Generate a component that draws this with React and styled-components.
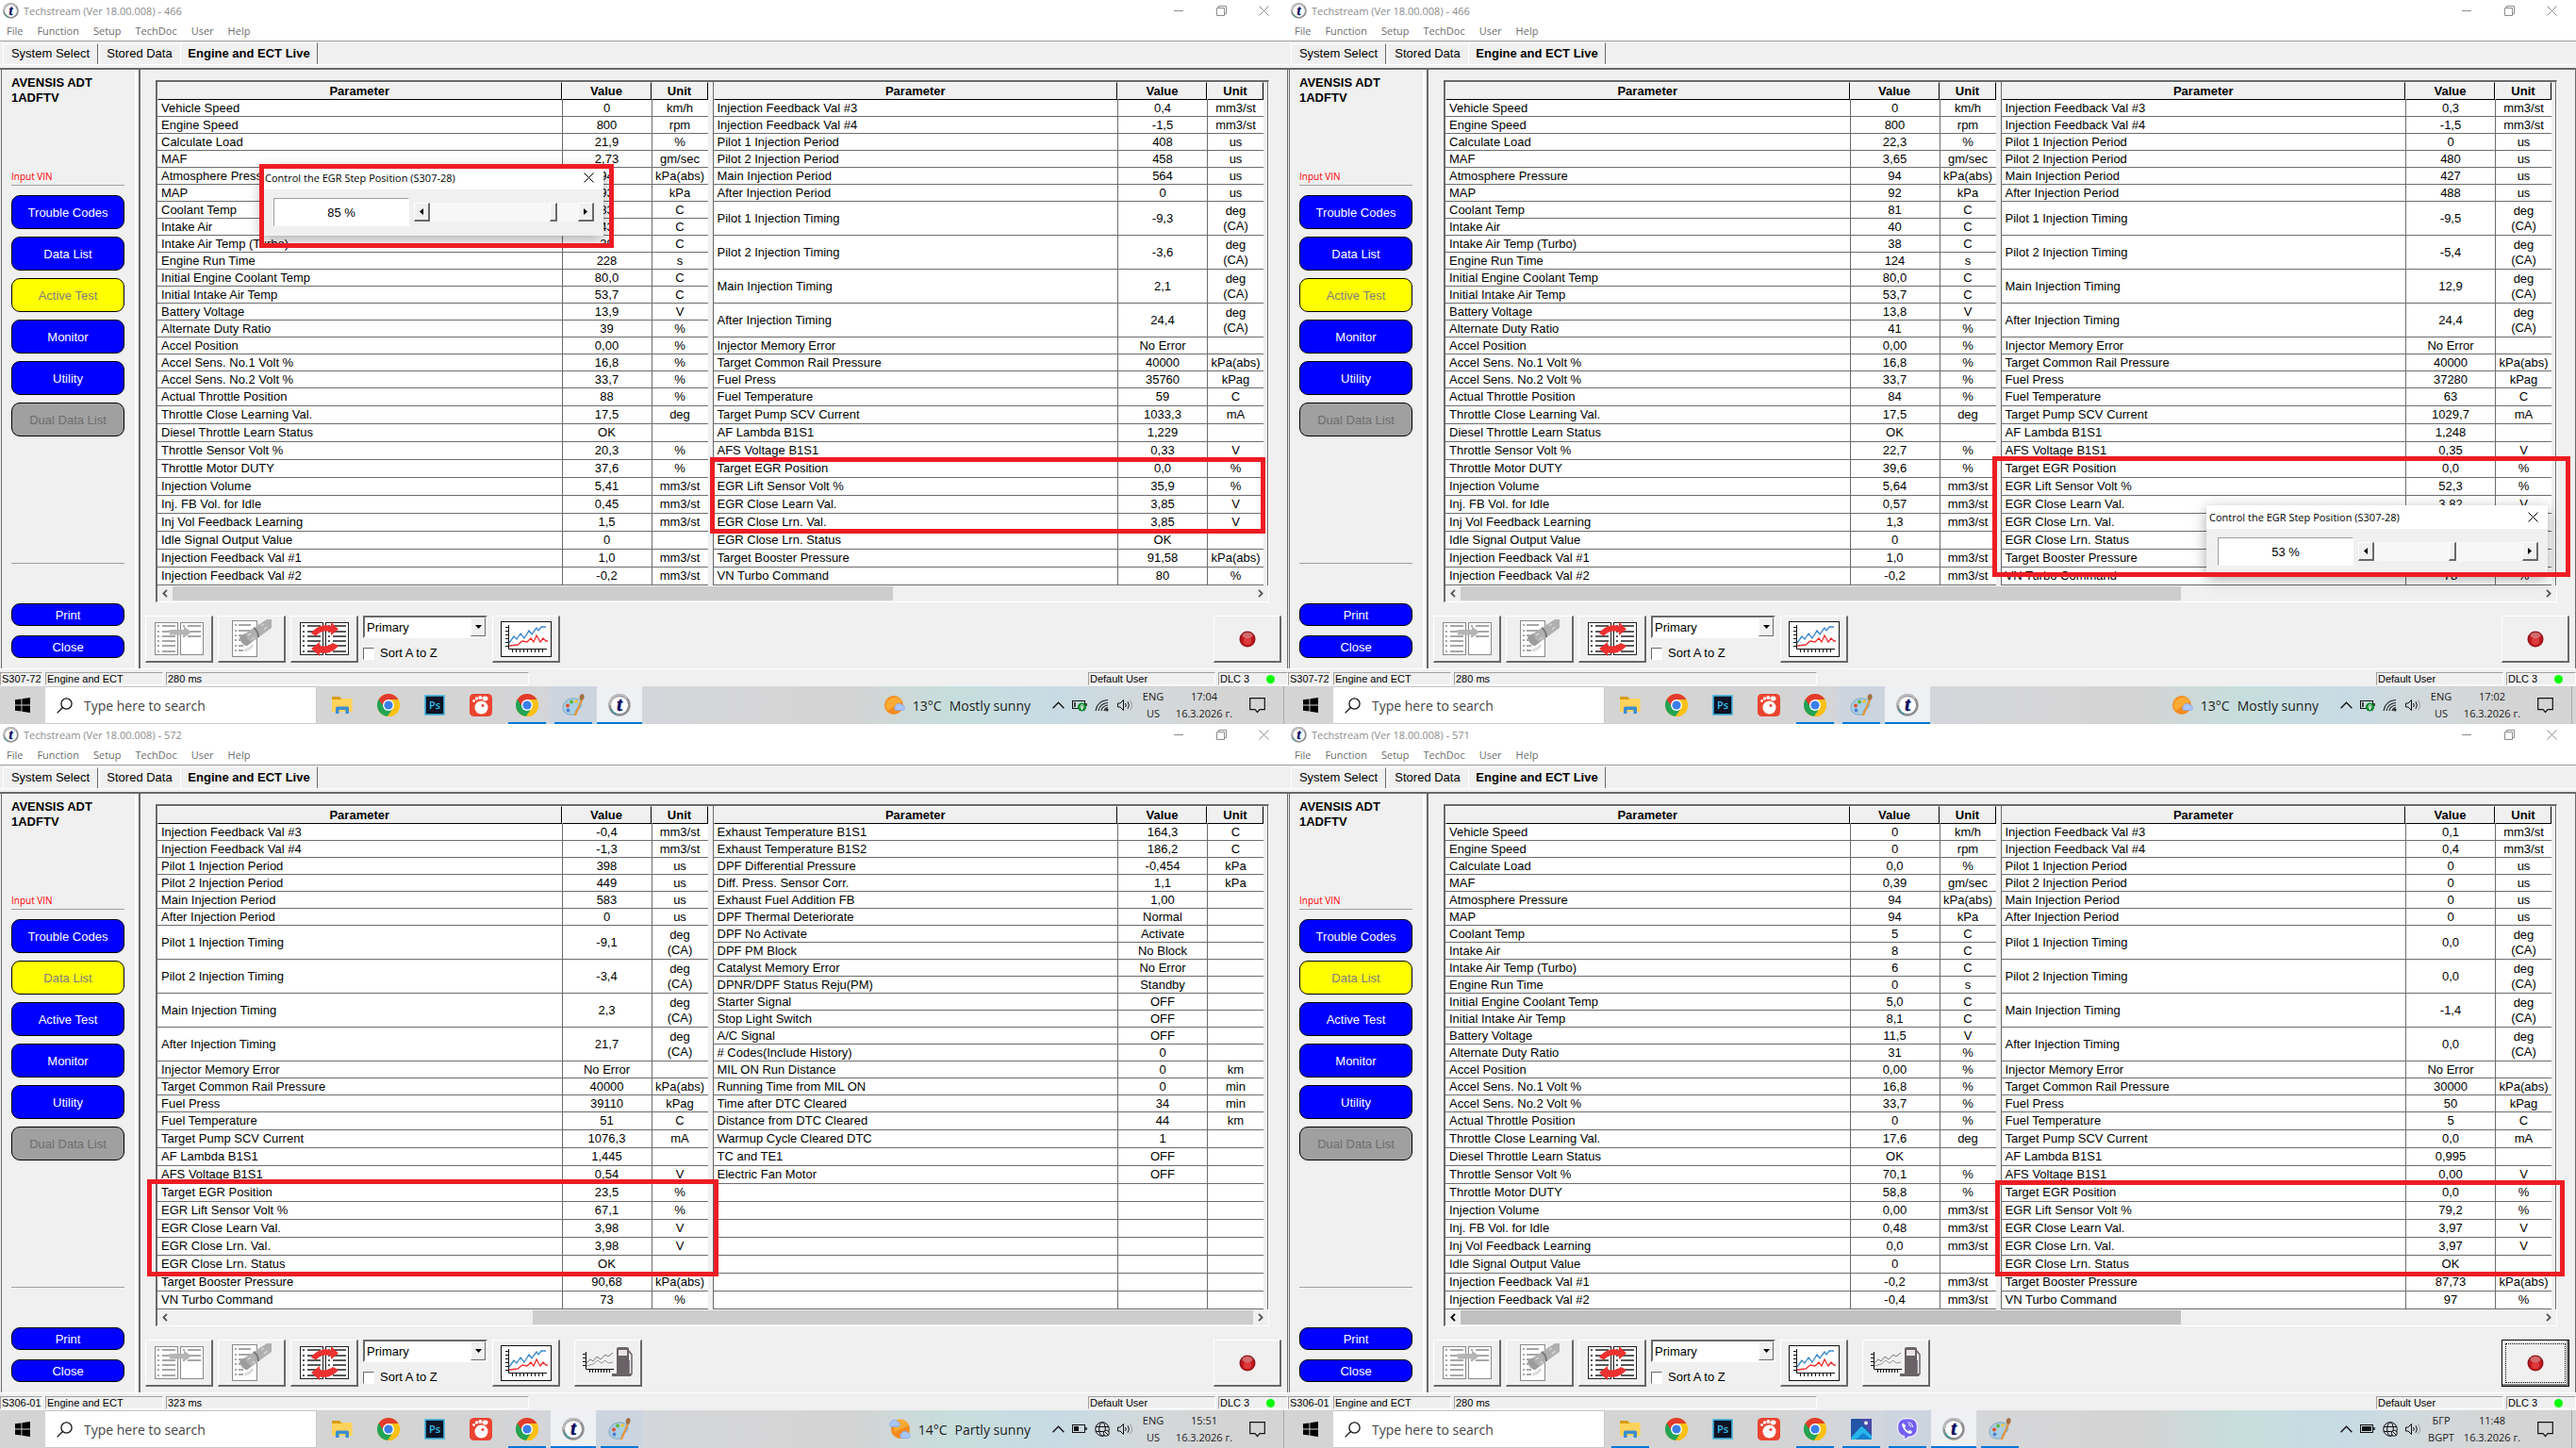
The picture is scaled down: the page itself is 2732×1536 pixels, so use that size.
import { useId, useState } from "react";
import styled, { createGlobalStyle, css } from "styled-components";

const GlobalStyle = createGlobalStyle`
  *, *::before, *::after { box-sizing: border-box; }
  body {
    margin: 0;
    background: #f0f0f0;
    font-family: "Liberation Sans", Arial, sans-serif;
    font-size: 13px;
    color: #000;
  }
  button, input, select { font: inherit; color: inherit; margin: 0; }
`;

const segoe = css`font-family: "Open Sans", "Segoe UI", sans-serif;`;

const raised = css`
  border: 2px solid;
  border-color: #fff #696969 #696969 #fff;
`;

const sunken = css`
  border: 1px solid;
  border-color: #a0a0a0 #fff #fff #a0a0a0;
`;

const Wall = styled.main`
  display: grid;
  grid-template-columns: 1fr 1fr;
  grid-auto-rows: minmax(50vh, auto);
`;

const Screen = styled.section`
  position: relative;
  display: flex;
  flex-direction: column;
  min-width: 0;
  overflow: hidden;
  background: #f0f0f0;
`;

const TitleBar = styled.header`
  ${segoe}
  display: flex;
  align-items: center;
  height: 23px;
  padding: 0 20px 0 3px;
  gap: 5px;
  background: #fff;
  color: #8c8c8c;
  font-size: 11px;
`;

const Title = styled.h1`
  margin: 0;
  flex: 1;
  font-size: 11px;
  font-weight: 400;
`;

const WindowButtons = styled.div`
  display: flex;
  gap: 34px;
  height: 20px;
`;

const GlyphButton = styled.button`
  display: flex;
  align-items: center;
  justify-content: center;
  padding: 0;
  border: 0;
  background: none;
`;

const MenuBar = styled.nav`
  ${segoe}
  display: flex;
  align-items: center;
  height: 21px;
  padding: 0 0 2px 7px;
  gap: 15px;
  background: #fff;
  border-bottom: 1px solid #a0a0a0;
  font-size: 11px;

  a {
    color: #6d6d6d;
    text-decoration: none;
  }
`;

const Tabs = styled.div`
  display: flex;
  align-items: flex-end;
  height: 25px;
  padding-left: 3px;
  border-bottom: 1px solid #fff;
`;

const Tab = styled.button`
  width: ${({ $width }) => $width}px;
  height: ${({ $active }) => ($active ? 23 : 22)}px;
  padding: 0 0 2px;
  border: 0;
  border-left: 1px solid #fff;
  border-top: 1px solid #fff;
  border-right: ${({ $edge }) => ($edge ? "1px solid #696969" : "0")};
  background: #f0f0f0;
  font-weight: ${({ $active }) => ($active ? 700 : 400)};
  white-space: nowrap;
  margin-right: 1px;
`;

const Workspace = styled.div`
  flex: 1;
  display: flex;
  gap: 2px;
  border-top: 2px solid #696969;
  margin-top: 3px;
  padding-left: 1px;
`;

const Sidebar = styled.aside`
  display: flex;
  flex-direction: column;
  flex: none;
  width: 144px;
  padding: 6px 11px 11px 10px;
  border-left: 1px solid #696969;
  border-right: 2px solid #fff;
`;

const Vehicle = styled.div`
  height: 98px;
  font-weight: 700;
  line-height: 16px;
`;

const Vin = styled.a`
  ${segoe}
  color: #f00;
  font-size: 10px;
  line-height: 18px;
  text-decoration: none;
`;

const Rule = styled.hr`
  width: 100%;
  margin: 0;
  border: 0;
  border-top: 1px solid #a0a0a0;
`;

const SideStack = styled.div`
  display: flex;
  flex-direction: column;
  gap: ${({ $gap }) => $gap}px;
  padding: ${({ $top }) => $top}px 0 0;
`;

const Spacer = styled.div`
  flex: 1;
`;

const sideColors = {
  blue: ["#0000ff", "#fff"],
  yellow: ["#ffff00", "#808080"],
  gray: ["#a0a0a0", "#6d6d6d"],
};

const SideButton = styled.button`
  height: ${({ $small }) => ($small ? 24 : 36)}px;
  padding: 0;
  border: 1px solid #000;
  border-radius: 9px;
  background: ${({ $tone }) => sideColors[$tone][0]};
  color: ${({ $tone }) => sideColors[$tone][1]};
`;

const Panel = styled.div`
  flex: 1;
  min-width: 0;
  display: flex;
  flex-direction: column;
  padding: 11px 6px 0 5px;
  border-left: 2px solid #696969;
  border-right: 1px solid #696969;
`;

const GridBox = styled.div`
  margin: 0 13px 0 11px;
  border: 1px solid;
  border-width: 2px 1px 1px 2px;
  border-color: #696969 #fff #fff #696969;
`;

const GridColumns = styled.div`
  display: flex;
  gap: 5px;
  padding-right: 4px;
  border-right: 1px solid #696969;
`;

const DataTable = styled.table`
  flex: 1;
  width: 0;
  table-layout: fixed;
  border-collapse: separate;
  border-spacing: 0;
  background: #fff;
  line-height: 16px;

  & + & {
    border-left: 1px solid #696969;
  }
`;

const HeadCell = styled.th`
  width: ${({ $width }) => $width || "auto"};
  height: 19px;
  padding: 0;
  background: #f0f0f0;
  border: 1px solid;
  border-color: #fff #000 #000 #fff;
`;

const Cell = styled.td`
  height: ${({ $height }) => $height}px;
  padding: 0 0 0 ${({ $name }) => ($name ? 4 : 0)}px;
  border-bottom: 1px solid #6d6d6d;
  border-left: ${({ $name }) => ($name ? "0" : "1px solid #6d6d6d")};
  text-align: ${({ $name }) => ($name ? "left" : "center")};
  white-space: nowrap;
`;

const ScrollBar = styled.div`
  display: flex;
  height: 17px;
  padding: 1px 0;
`;

const ScrollTrack = styled.div`
  flex: 1;
  display: flex;
  justify-content: ${({ $end }) => ($end ? "flex-end" : "flex-start")};
`;

const ScrollThumb = styled.div`
  width: 66.66%;
  background: ${({ $dark }) => ($dark ? "#c0c0c0" : "#cdcdcd")};
`;

const ScrollArrow = styled(GlyphButton)`
  width: 16px;
`;

const ToolRow = styled.div`
  display: flex;
  align-items: flex-start;
  padding-top: 14px;
  gap: 5px;
`;

const ToolButton = styled.button`
  display: flex;
  align-items: center;
  justify-content: center;
  width: 72px;
  height: 50px;
  padding: 0;
  background: #f0f0f0;
  ${raised}
  border-width: 1px 2px 2px 1px;
`;

const FuelButton = styled(ToolButton)`
  margin-left: 10px;
`;

const RecordButton = styled(ToolButton)`
  margin-left: auto;
  ${({ $focused }) =>
    $focused &&
    css`
      border: 1px solid #000;
      box-shadow: inset -2px -2px 0 #808080, inset 1px 1px 0 #fff;
      outline: 1px dotted #000;
      outline-offset: -5px;
    `}
`;

const SortBox = styled.div`
  display: flex;
  flex-direction: column;
  width: 132px;
  gap: 8px;
`;

const SelectWrap = styled.div`
  position: relative;
  height: 24px;

  select {
    appearance: none;
    width: 100%;
    height: 24px;
    padding: 1px 20px 0 2px;
    background: #fff;
    border: 2px solid;
    border-color: #696969 #fff #fff #696969;
    border-radius: 0;
  }
`;

const SelectArrow = styled.span`
  position: absolute;
  top: 2px;
  right: 2px;
  bottom: 2px;
  display: flex;
  align-items: center;
  justify-content: center;
  width: 16px;
  background: #f0f0f0;
  ${raised}
  border-width: 1px;
  pointer-events: none;
`;

const CheckLabel = styled.label`
  display: flex;
  align-items: center;
  gap: 6px;
  line-height: 16px;

  input {
    appearance: none;
    width: 12px;
    height: 13px;
    background: #fff;
    border: 1px solid;
    border-color: #696969 #fff #fff #696969;
  }
`;

const StatusBar = styled.footer`
  display: flex;
  gap: 3px;
  height: 19px;
  padding: 3px 0 1px;
  border-top: 1px solid #fff;
  font-size: 11px;
`;

const StatusCell = styled.div`
  display: flex;
  align-items: center;
  width: ${({ $width }) => $width}px;
  margin-left: ${({ $push }) => ($push ? "auto" : "0")};
  padding-left: 1px;
  gap: 18px;
  ${sunken}
  white-space: nowrap;
`;

const Led = styled.span`
  width: 9px;
  height: 9px;
  border-radius: 50%;
  background: #0f0;
`;

const TaskBar = styled.div`
  ${segoe}
  display: flex;
  height: 40px;
  background: linear-gradient(90deg, #d4d4d4 0 38%, #d2d6de 46%, #d5d6d8 55%, #d4d4d4 66%, #c6dedd 74%, #c8dbe4 82%, #d4d8da 90%, #d4d4d4 95%);
`;

const StartButton = styled(GlyphButton)`
  width: 48px;
`;

const Search = styled.label`
  display: flex;
  align-items: center;
  width: 288px;
  padding-left: 12px;
  gap: 12px;
  background: #fff;
  border: 1px solid #c8c8c8;
  border-left: 0;

  input {
    flex: 1;
    min-width: 0;
    padding: 0;
    border: 0;
    outline: 0;
    background: none;
    font-size: 14px;
  }
  input::placeholder {
    color: #444;
    opacity: 1;
  }
`;

const Pinned = styled.div`
  display: flex;
  gap: 1px;
  padding-left: 3px;
`;

const taskBack = { active: "#eef0f4", open: "#ccd4df" };

const TaskButton = styled(GlyphButton)`
  width: 48px;
  height: 40px;
  background: ${({ $state }) => taskBack[$state] || "none"};
  position: relative;

  &::after {
    content: "";
    position: absolute;
    bottom: 0;
    left: ${({ $state }) => ($state === "active" ? 0 : 4)}px;
    right: ${({ $state }) => ($state === "active" ? 0 : 4)}px;
    height: 2px;
    background: ${({ $state }) => ($state ? "#0078d7" : "none")};
  }
`;

const Tray = styled.div`
  display: flex;
  align-items: center;
  margin-left: auto;
  font-size: 14px;
  color: #1c1c1c;
`;

const Weather = styled.div`
  display: flex;
  align-items: center;
  gap: 8px;
  margin-right: 23px;
  white-space: nowrap;
`;

const TrayIcons = styled.div`
  display: flex;
  align-items: center;
  gap: 8px;
`;

const TrayText = styled.div`
  width: ${({ $width }) => $width}px;
  font-size: 11px;
  line-height: 18px;
  text-align: center;
  white-space: nowrap;
`;

const Notice = styled(GlyphButton)`
  width: 36px;
  margin-left: 5px;
  margin-right: 10px;
`;

const ShowDesktop = styled.div`
  width: 5px;
  height: 40px;
  border-left: 1px solid #a8a8a8;
`;

/* Red frames and the test dialog float over the data grid */
const Mark = styled.div`
  position: absolute;
  left: ${({ $x }) => $x}px;
  top: ${({ $y }) => $y}px;
  width: ${({ $w }) => $w}px;
  height: ${({ $h }) => $h}px;
  border: 5px solid #ed1c24;
  pointer-events: none;
`;

const Dialog = styled.div`
  position: absolute;
  left: ${({ $x }) => $x}px;
  top: ${({ $y }) => $y}px;
  width: 362px;
  background: #f0f0f0;
  box-shadow: 0 4px 14px rgba(0, 0, 0, 0.35);
`;

const DialogTitle = styled.div`
  ${segoe}
  display: flex;
  align-items: center;
  justify-content: space-between;
  height: 25px;
  padding: 0 10px 0 3px;
  background: #fff;
  font-size: 11px;
`;

const DialogBody = styled.div`
  display: flex;
  align-items: center;
  padding: 9px 10px 10px 12px;
`;

const StepValue = styled.input`
  width: 144px;
  height: 30px;
  margin-right: 5px;
  padding: 0;
  text-align: center;
  background: #fff;
  border: 1px solid;
  border-color: #a0a0a0 #fff #fff #a0a0a0;
`;

const StepButton = styled(GlyphButton)`
  width: 17px;
  height: 20px;
  background: #f0f0f0;
  ${raised}
  border-width: 1px 2px 2px 1px;
`;

const StepSlider = styled.input`
  appearance: none;
  flex: 1;
  min-width: 0;
  height: 20px;
  background: #f7f7f7;

  &::-webkit-slider-thumb {
    appearance: none;
    width: 8px;
    height: 20px;
    background: #f0f0f0;
    border: 1px solid;
    border-width: 1px 2px 2px 1px;
    border-color: #fff #696969 #696969 #fff;
  }
`;

const TechLogo = ({ size }) => (
  <svg width={size} height={size} viewBox="0 0 24 24">
    <circle cx="12" cy="12" r="10.4" fill="#fff" stroke="#8f8f8f" strokeWidth="2.6" />
    <path d="M2 12A10 10 0 0 1 20 5" fill="none" stroke="#bdbdbd" strokeWidth="2.6" />
    <path d="M3 16A10 10 0 0 0 9 21.6" fill="none" stroke="#3f9a9a" strokeWidth="1.4" />
    <text x="12" y="18" textAnchor="middle" fontFamily="Liberation Serif, serif" fontStyle="italic" fontWeight="700" fontSize="20" fill="#0a0a60" stroke="#0a0a60" strokeWidth=".6">t</text>
  </svg>
);

const CloseGlyph = () => (
  <svg width="11" height="11" viewBox="0 0 11 11" stroke="currentColor" fill="none">
    <path d="M.5.5l10 10M10.5.5l-10 10" />
  </svg>
);

const Chevron = ({ flip, color = "#555" }) => (
  <svg width="6" height="9" viewBox="0 0 6 9" fill="none" stroke={color} strokeWidth="1.8">
    <path d={flip ? "M1 .8l3.6 3.7L1 8.2" : "M5 .8L1.4 4.5 5 8.2"} />
  </svg>
);

const Triangle = ({ flip }) => (
  <svg width="4" height="7" viewBox="0 0 4 7">
    <path d={flip ? "M0 0l4 3.5L0 7z" : "M4 0L0 3.5 4 7z"} />
  </svg>
);

const rowsAll = [4, 10, 15, 20, 25, 31];

const Page = ({ x, color, lines = rowsAll }) => (
  <g>
    <rect x={x + 0.5} y="0.5" width="24" height="34" fill="#fff" stroke={color} />
    {lines.map((y) => (
      <path key={y} d={`M${x + 3} ${y}h2M${x + 8} ${y}h14`} stroke={color} strokeWidth="1.5" />
    ))}
  </g>
);

const MoveIcon = () => (
  <svg width="52" height="35" viewBox="0 0 52 35">
    <Page x={0} color="#8a8a8a" />
    <Page x={27} color="#8a8a8a" lines={[4, 10, 15]} />
    <path d="M16 8h15V4.5l8 6-8 6V13.5H16z" fill="#b4b4b4" />
  </svg>
);

const EraseIcon = () => (
  <svg width="42" height="41" viewBox="0 0 42 41">
    <rect x=".5" y="1.5" width="26" height="38" fill="#fff" stroke="#8a8a8a" />
    {[6, 12, 17, 22, 28, 33].map((y) => (
      <path key={y} d={`M3 ${y}h2M7 ${y}h${y > 15 ? 5 : 13}`} stroke="#8a8a8a" strokeWidth="1.5" />
    ))}
    <path d="M13 33c6-1 8-4 9-6" stroke="#dcdcdc" strokeWidth="3" fill="none" />
    <path d="M8 19L37 0h5v9L16 28c-4 0-8-5-8-9z" fill="#b0b0b0" />
    <path d="M8 19c2 4 4 8 8 9l5-4c-4-1-6-5-7-9z" fill="#9c9c9c" />
    <path d="M23 9c3 2 5 5 5 10" fill="none" stroke="#777" strokeWidth="2" />
    <path d="M17 17l3-2M21 21l3-2M31 7l3-2M34 11l3-3" stroke="#d8d8d8" strokeWidth="1.5" />
  </svg>
);

const SwapIcon = () => (
  <svg width="52" height="36" viewBox="0 0 52 36">
    <Page x={0} color="#222" />
    <Page x={27} color="#222" />
    <path d="M12 12C17 4 27 2 33 4V0l8 7.5L33 14v-3.500c-6-2-11-1-16 4z" fill="#ed3030" />
    <path d="M41 25c-5 7-14 9-20 7.500V36l-9-8 9-7v4c6 1 10 0 14-3z" fill="#ed3030" />
  </svg>
);

const ChartIcon = () => (
  <svg width="54" height="38" viewBox="0 0 54 38" fill="none">
    <rect x=".5" y=".5" width="53" height="37" fill="#fff" stroke="#111" />
    <path d="M8.500 4v25.500H49M5 6.500h4M5 10.500h4M5 14.500h4M5 18.500h4M5 22.500h4M5 26.500h4" stroke="#111" />
    <path d="M12.500 30v3M16.500 30v3M20.500 30v3M24.500 30v3M28.500 30v3M32.500 30v3M36.500 30v3M40.500 30v3M44.500 30v3" stroke="#111" />
    <path d="M9 23l5-7 3 3 4-6 4 5 5-8 3 4 5-7 2 3 3-4h5" stroke="#3b86cc" strokeWidth="1.3" />
    <path d="M9 26l9-1 5-4 5 1 4-4 3 4 3-7 4 7 3-4 3 3h2" stroke="#ed3030" strokeWidth="1.3" />
  </svg>
);

const FuelIcon = () => (
  <svg width="54" height="34" viewBox="0 0 54 34" fill="none">
    <path d="M3.500 5v18.500H33M0 7.500h4M0 11.500h4M0 15.500h4M0 19.500h4" stroke="#111" />
    <path d="M7.500 24v3M10.500 24v3M13.500 24v3M16.500 24v3M19.500 24v3M22.500 24v3M25.500 24v3M28.500 24v3" stroke="#111" />
    <path d="M4 17l4-4 3 2 4-5 4 3 5-5 3 2 5-4" stroke="#777" />
    <path d="M4 20l7-2 5-4 4 3 4-3 3 3 5-1" stroke="#999" />
    <path d="M36 2q0-2 2-2h9q2 0 2 2v26h2v3H31v-3h5z" fill="#6a6266" />
    <rect x="38" y="3" width="9" height="6" fill="#e8e4e4" />
    <path d="M49 4l3 4v20q-1 3-3 1V14" stroke="#6a6266" strokeWidth="1.5" />
  </svg>
);

const RecordIcon = () => (
  <svg width="18" height="18" viewBox="0 0 18 18">
    <circle cx="9" cy="9" r="8.5" fill="#8e1116" />
    <circle cx="9" cy="9.5" r="7" fill="#c01a20" />
    <circle cx="9" cy="11" r="4" fill="#dc3b3b" />
    <ellipse cx="9" cy="5" rx="5.5" ry="3.2" fill="#d98585" opacity=".75" />
  </svg>
);

const WindowsIcon = () => (
  <svg width="16" height="16" viewBox="0 0 16 16">
    <path d="M0 2.300L6.500 1.400V7.600H0zM7.400 1.300L16 0v7.600H7.400zM0 8.400h6.500v6.200L0 13.700zM7.400 8.400H16V16l-8.600-1.200z" />
  </svg>
);

const SearchIcon = () => (
  <svg width="17" height="17" viewBox="0 0 17 17" fill="none" stroke="#111" strokeWidth="1.3">
    <circle cx="10.5" cy="6.5" r="5.6" />
    <path d="M6.500 10.500L.6 16.400" />
  </svg>
);

const FolderIcon = () => (
  <svg width="22" height="20" viewBox="0 0 22 20">
    <path d="M0 1h8l2 2h11v4H0z" fill="#d99b0f" />
    <path d="M0 4h9l2-1h10.500v14H0z" fill="#ffd35c" />
    <path d="M4 19v-6q0-1.500 1.500-1.500h11q1.500 0 1.500 1.500v6h-3.500v-4h-7v4z" fill="#3b8ed0" />
  </svg>
);

const ChromeIcon = () => (
  <svg width="24" height="24" viewBox="0 0 24 24">
    <circle cx="12" cy="12" r="12" fill="#fbc116" />
    <path d="M1.600 6A12 12 0 0 0 11 24l6.500-9z" fill="#23a455" />
    <path d="M12 6h10.400A12 12 0 0 1 11 24l6-9z" fill="#fbc116" />
    <path d="M1.600 6A12 12 0 0 1 22.400 6H12z" fill="#e33b2e" />
    <path d="M1.600 6L7 15l5-9z" fill="#23a455" />
    <path d="M1.600 6L6.500 13 12 6z" fill="#e33b2e" />
    <path d="M1.600 6l5.200 9L5 17 .8 8z" fill="#23a455" />
    <circle cx="12" cy="12" r="6" fill="#fff" />
    <circle cx="12" cy="12" r="4.6" fill="#3c7eea" />
  </svg>
);

const PhotoshopIcon = () => (
  <svg width="22" height="22" viewBox="0 0 22 22">
    <rect x="1" y="1" width="20" height="20" fill="#0c1226" stroke="#3fb4dc" strokeWidth="1.6" />
    <text x="11" y="15" textAnchor="middle" fontFamily="Open Sans, sans-serif" fontWeight="600" fontSize="11" fill="#35c0ea">Ps</text>
  </svg>
);

const GomIcon = () => (
  <svg width="24" height="24" viewBox="0 0 24 24">
    <rect width="24" height="24" rx="4.5" fill="#ea4430" />
    <circle cx="12.5" cy="14.5" r="7" fill="#fff" />
    <circle cx="4.6" cy="7.5" r="1.4" fill="#fff" />
    <circle cx="7.5" cy="5" r="1.7" fill="#fff" />
    <circle cx="11.3" cy="3.9" r="2" fill="#fff" />
    <ellipse cx="16.5" cy="5" rx="3" ry="2.4" fill="#fff" />
    <circle cx="14" cy="12.5" r="1.5" fill="#ea4430" />
  </svg>
);

const PaintIcon = () => (
  <svg width="24" height="24" viewBox="0 0 24 24">
    <path d="M1 15C1 8 8 4 14 5c6 1 8 5 6 9-1 2-4 1-5 3s1 4-3 5C6 23 1 20 1 15z" fill="#a9cfe4" stroke="#6b9dba" strokeWidth=".8" />
    <circle cx="6" cy="12.5" r="2" fill="#e2502e" />
    <circle cx="10" cy="8.5" r="1.9" fill="#5db53c" />
    <circle cx="15" cy="8" r="1.8" fill="#f4c431" />
    <circle cx="6.5" cy="17.5" r="1.9" fill="#4d7fd0" />
    <path d="M12.500 23L20 6l2 1-7 16z" fill="#e2953d" />
    <path d="M19 6c-1-3 0-5 2-6 2 0 3 2 2.500 4L22 7z" fill="#a3703d" />
  </svg>
);

const PhotosIcon = () => (
  <svg width="22" height="22" viewBox="0 0 22 22">
    <rect width="22" height="22" rx="1" fill="#2455a8" />
    <path d="M9 0h13v16z" fill="#4a4aa8" />
    <path d="M0 20L10 9q1.500-1.500 3 0l9 9v4H1z" fill="#27b5ea" />
    <path d="M5 22l8-7 9 7z" fill="#1283cf" />
    <circle cx="16" cy="4.5" r="1.9" fill="#e6effb" />
  </svg>
);

const ViberIcon = () => (
  <svg width="24" height="24" viewBox="0 0 24 24">
    <path d="M12 .6c8 0 10.500 3 10.500 10S19 20.500 13 20.500L8.500 24v-4.200C3.500 18.500 1.500 16 1.500 10.500 1.500 3.500 4 .6 12 .6z" fill="#7360f2" stroke="#efeafd" strokeWidth="1.4" />
    <path d="M7.500 5.500c-2 1-1.500 3 0 5.500 2 3.500 5 6 7.500 6 1.500-.5 2.500-1.800 1.500-2.700l-2-1.300c-1 0-1 1.200-2 1-1.800-.8-3-2.300-3.400-4 .2-.8 1.200-.8 1-1.800z" fill="#fff" />
    <path d="M12.500 5c3 0 5 2 5 5M13 7.200c1.500.2 2.400 1 2.500 2.500" stroke="#fff" fill="none" />
  </svg>
);

const taskIcons = {
  Explorer: <FolderIcon />,
  Chrome: <ChromeIcon />,
  Photoshop: <PhotoshopIcon />,
  Player: <GomIcon />,
  Browser: <ChromeIcon />,
  Paint: <PaintIcon />,
  Techstream: <TechLogo size={24} />,
  Photos: <PhotosIcon />,
  Viber: <ViberIcon />,
};

const Cloud = ({ x, y }) => (
  <path transform={`translate(${x} ${y})`} d="M3 8.500a3 3 0 0 1 0-5A4 4 0 0 1 10 3a3 3 0 0 1 1 5.500z" fill="#a9c6fb" stroke="#7ea4ee" strokeWidth=".7" />
);

const WeatherIcon = ({ partly }) => (
  <svg width={partly ? 24 : 22} height="22" viewBox={partly ? "0 0 24 22" : "0 0 22 22"}>
    <circle cx={partly ? 13 : 10} cy="11" r="10" fill="#f68a1e" />
    <path d={partly ? "M6 3a10 10 0 0 1 16 4L6 14z" : "M1 11A10 10 0 0 1 19 7L3 17z"} fill="#f9ab33" />
    {partly && <Cloud x={0} y={0} />}
    <Cloud x={partly ? 11 : 9} y={partly ? 12 : 8} />
  </svg>
);

const UpIcon = () => (
  <svg width="13" height="8" viewBox="0 0 13 8" fill="none" stroke="#111" strokeWidth="1.3">
    <path d="M.6 7.200l5.900-6 5.900 6" />
  </svg>
);

const BatteryIcon = ({ kind }) => (
  <svg width="16" height="14" viewBox="0 0 16 14" fill="none" stroke="#111">
    <rect x=".5" y="2.5" width="13" height="8" />
    <path d="M15 5v3" strokeWidth="1.5" />
    {kind === "full" && <rect x="2.5" y="4.5" width="9" height="4" fill="#111" />}
    {kind === "half" && <rect x="2.5" y="4.5" width="4" height="4" fill="#111" />}
    {kind === "eco" && (
      <g>
        <path d="M3 4v5" strokeWidth="1.5" />
        <circle cx="10.5" cy="9" r="4.6" fill="#108a2c" stroke="none" />
        <path d="M10.500 6c2 2 2 4 0 5-2-1-2-3 0-5zM10.500 8v4" stroke="#fff" />
      </g>
    )}
  </svg>
);

const WifiIcon = () => (
  <svg width="16" height="14" viewBox="0 0 16 14" fill="none" stroke="#222" strokeWidth="1.2">
    <path d="M1 13C2 6 7 2 14 1.500M4 13c1-5 4-8 10-8.500M7 13c.5-3 3-5.500 7-6M10 13c.5-2 1.500-3 4-3.500" />
    <circle cx="13" cy="12" r="1" fill="#222" />
  </svg>
);

const GlobeIcon = () => (
  <svg width="16" height="16" viewBox="0 0 16 16" fill="none" stroke="#111">
    <circle cx="8" cy="8" r="7.3" />
    <ellipse cx="8" cy="8" rx="3.3" ry="7.3" />
    <path d="M1 5.500h14M1 10.500h14" />
    <circle cx="12.3" cy="12.3" r="3" fill="#d4dde0" />
    <path d="M10.300 10.300l4 4" />
  </svg>
);

const SoundIcon = () => (
  <svg width="17" height="14" viewBox="0 0 17 14" fill="none" stroke="#111">
    <path d="M.5 5v4h2.500l3.500 3.500v-11L3 5z" />
    <path d="M8.500 5q1.500 2 0 4M11 3.200q2.800 3.800 0 7.600" />
    <path d="M13.500 1.500q4 5.500 0 11" stroke="#999" />
  </svg>
);

const NoticeIcon = () => (
  <svg width="17" height="17" viewBox="0 0 17 17" fill="none" stroke="#111" strokeWidth="1.2">
    <path d="M.7.700h15.600v12H11L8.500 15.500 6 12.700H.7z" />
  </svg>
);

const leftNames = [
  ["Vehicle Speed", "km/h"],
  ["Engine Speed", "rpm"],
  ["Calculate Load", "%"],
  ["MAF", "gm/sec"],
  ["Atmosphere Pressure", "kPa(abs)"],
  ["MAP", "kPa"],
  ["Coolant Temp", "C"],
  ["Intake Air", "C"],
  ["Intake Air Temp (Turbo)", "C"],
  ["Engine Run Time", "s"],
  ["Initial Engine Coolant Temp", "C"],
  ["Initial Intake Air Temp", "C"],
  ["Battery Voltage", "V"],
  ["Alternate Duty Ratio", "%"],
  ["Accel Position", "%"],
  ["Accel Sens. No.1 Volt %", "%"],
  ["Accel Sens. No.2 Volt %", "%"],
  ["Actual Throttle Position", "%"],
  ["Throttle Close Learning Val.", "deg"],
  ["Diesel Throttle Learn Status", ""],
  ["Throttle Sensor Volt %", "%"],
  ["Throttle Motor DUTY", "%"],
  ["Injection Volume", "mm3/st"],
  ["Inj. FB Vol. for Idle", "mm3/st"],
  ["Inj Vol Feedback Learning", "mm3/st"],
  ["Idle Signal Output Value", ""],
  ["Injection Feedback Val #1", "mm3/st"],
  ["Injection Feedback Val #2", "mm3/st"],
];

const injectionNames = [
  ["Injection Feedback Val #3", "mm3/st"],
  ["Injection Feedback Val #4", "mm3/st"],
  ["Pilot 1 Injection Period", "us"],
  ["Pilot 2 Injection Period", "us"],
  ["Main Injection Period", "us"],
  ["After Injection Period", "us"],
  ["Pilot 1 Injection Timing", "deg (CA)"],
  ["Pilot 2 Injection Timing", "deg (CA)"],
  ["Main Injection Timing", "deg (CA)"],
  ["After Injection Timing", "deg (CA)"],
  ["Injector Memory Error", ""],
  ["Target Common Rail Pressure", "kPa(abs)"],
  ["Fuel Press", "kPag"],
  ["Fuel Temperature", "C"],
  ["Target Pump SCV Current", "mA"],
  ["AF Lambda B1S1", ""],
  ["AFS Voltage B1S1", "V"],
  ["Target EGR Position", "%"],
  ["EGR Lift Sensor Volt %", "%"],
  ["EGR Close Learn Val.", "V"],
  ["EGR Close Lrn. Val.", "V"],
  ["EGR Close Lrn. Status", ""],
  ["Target Booster Pressure", "kPa(abs)"],
  ["VN Turbo Command", "%"],
];

const exhaustNames = [
  ["Exhaust Temperature B1S1", "C"],
  ["Exhaust Temperature B1S2", "C"],
  ["DPF Differential Pressure", "kPa"],
  ["Diff. Press. Sensor Corr.", "kPa"],
  ["Exhaust Fuel Addition FB", ""],
  ["DPF Thermal Deteriorate", ""],
  ["DPF No Activate", ""],
  ["DPF PM Block", ""],
  ["Catalyst Memory Error", ""],
  ["DPNR/DPF Status Reju(PM)", ""],
  ["Starter Signal", ""],
  ["Stop Light Switch", ""],
  ["A/C Signal", ""],
  ["# Codes(Include History)", ""],
  ["MIL ON Run Distance", "km"],
  ["Running Time from MIL ON", "min"],
  ["Time after DTC Cleared", "min"],
  ["Distance from DTC Cleared", "km"],
  ["Warmup Cycle Cleared DTC", ""],
  ["TC and TE1", ""],
  ["Electric Fan Motor", ""],
  ["", ""], ["", ""], ["", ""], ["", ""], ["", ""], ["", ""], ["", ""],
];

const fill = (names, values) => {
  const list = values.split(" ");
  return names.map(([name, unit], i) => ({ name, unit, value: (list[i] || "").replace("_", " ") }));
};

const pinned = [["Explorer"], ["Chrome"], ["Photoshop"], ["Player"], ["Browser", "run"]];

const screens = [
  {
    title: "466",
    active: "Active Test",
    status: ["S307-72", "280 ms"],
    left: fill(leftNames, "0 800 21,9 2,73 94 93 83 43 39 228 80,0 53,7 13,9 39 0,00 16,8 33,7 88 17,5 OK 20,3 37,6 5,41 0,45 1,5 0 1,0 -0,2"),
    right: fill(injectionNames, "0,4 -1,5 408 458 564 0 -9,3 -3,6 2,1 24,4 No_Error 40000 35760 59 1033,3 1,229 0,33 0,0 35,9 3,85 3,85 OK 91,58 80"),
    dialog: { x: 278, y: 176, value: 85 },
    marks: [[275, 174, 376, 89], [753, 485, 589, 81]],
    tasks: [...pinned, ["Paint", "open"], ["Techstream", "active"]],
    weather: ["13°C", "Mostly sunny"],
    battery: "eco",
    lang: ["ENG", "US"],
    time: "17:04",
  },
  {
    title: "466",
    active: "Active Test",
    status: ["S307-72", "280 ms"],
    left: fill(leftNames, "0 800 22,3 3,65 94 92 81 40 38 124 80,0 53,7 13,8 41 0,00 16,8 33,7 84 17,5 OK 22,7 39,6 5,64 0,57 1,3 0 1,0 -0,2"),
    right: fill(injectionNames, "0,3 -1,5 0 480 427 488 -9,5 -5,4 12,9 24,4 No_Error 40000 37280 63 1029,7 1,248 0,35 0,0 52,3 3,82 3,82 OK 91,58 78"),
    dialog: { x: 974, y: 536, value: 53 },
    marks: [[747, 484, 613, 128]],
    tasks: [...pinned, ["Paint", "open"], ["Techstream", "active"]],
    weather: ["13°C", "Mostly sunny"],
    battery: "eco",
    lang: ["ENG", "US"],
    time: "17:02",
  },
  {
    title: "572",
    active: "Data List",
    status: ["S306-01", "323 ms"],
    left: fill(injectionNames, "-0,4 -1,3 398 449 583 0 -9,1 -3,4 2,3 21,7 No_Error 40000 39110 51 1076,3 1,445 0,54 23,5 67,1 3,98 3,98 OK 90,68 73"),
    right: fill(exhaustNames, "164,3 186,2 -0,454 1,1 1,00 Normal Activate No_Block No_Error Standby OFF OFF OFF 0 0 0 34 44 1 OFF OFF"),
    marks: [[156, 483, 606, 103]],
    tasks: [...pinned, ["Techstream", "active"], ["Paint", "open"]],
    weather: ["14°C", "Partly sunny"],
    battery: "half",
    lang: ["ENG", "US"],
    time: "15:51",
    fuel: true,
    scrolled: true,
  },
  {
    title: "571",
    active: "Data List",
    status: ["S306-01", "280 ms"],
    left: fill(leftNames, "0 0 0,0 0,39 94 94 5 8 6 0 5,0 8,1 11,5 31 0,00 16,8 33,7 0 17,6 OK 70,1 58,8 0,00 0,48 0,0 0 -0,2 -0,4"),
    right: fill(injectionNames, "0,1 0,4 0 0 0 0 0,0 0,0 -1,4 0,0 No_Error 30000 50 5 0,0 0,995 0,00 0,0 79,2 3,97 3,97 OK 87,73 97"),
    marks: [[750, 484, 604, 102]],
    tasks: [["Explorer", "run"], ["Chrome"], ["Photoshop"], ["Player"], ["Browser", "run"], ["Photos", "run"], ["Viber", "open"], ["Techstream", "active"], ["Paint", "run"]],
    battery: "full",
    lang: ["БГР", "BGPT"],
    time: "11:48",
    fuel: true,
    focused: true,
  },
];

function ParameterTable({ rows }) {
  let used = 0;
  return (
    <DataTable>
      <thead>
        <tr>
          <HeadCell>Parameter</HeadCell>
          <HeadCell $width="95px">Value</HeadCell>
          <HeadCell $width="60px">Unit</HeadCell>
        </tr>
      </thead>
      <tbody>
        {rows.map((row, i) => {
          const double = row.unit === "deg (CA)";
          const height = double ? 36 : used < 17 ? 18 : 19;
          used += double ? 2 : 1;
          return (
            <tr key={i}>
              <Cell $name $height={height}>{row.name}</Cell>
              <Cell $height={height}>{row.value}</Cell>
              <Cell $height={height}>{double ? <>deg<br />(CA)</> : row.unit}</Cell>
            </tr>
          );
        })}
      </tbody>
    </DataTable>
  );
}

function StepDialog({ x, y, value }) {
  const [step, setStep] = useState(value);
  return (
    <Dialog $x={x} $y={y} role="dialog" aria-label="Control the EGR Step Position">
      <DialogTitle>
        <span>Control the EGR Step Position (S307-28)</span>
        <GlyphButton aria-label="Close dialog"><CloseGlyph /></GlyphButton>
      </DialogTitle>
      <DialogBody>
        <StepValue aria-label="Step value" readOnly value={`${step} %`} />
        <StepButton aria-label="Decrease" onClick={() => setStep(Math.max(0, step - 1))}><Triangle /></StepButton>
        <StepSlider type="range" aria-label="EGR step" value={step} onChange={(e) => setStep(Number(e.target.value))} />
        <StepButton aria-label="Increase" onClick={() => setStep(Math.min(100, step + 1))}><Triangle flip /></StepButton>
      </DialogBody>
    </Dialog>
  );
}

function SideMenu({ active }) {
  const items = ["Trouble Codes", "Data List", "Active Test", "Monitor", "Utility", "Dual Data List"];
  const tone = (item) => (item === active ? "yellow" : item === "Dual Data List" ? "gray" : "blue");
  return (
    <Sidebar>
      <Vehicle>AVENSIS ADT<br />1ADFTV</Vehicle>
      <Vin href="#vin">Input VIN</Vin>
      <Rule />
      <SideStack $gap={8} $top={10}>
        {items.map((item) => (
          <SideButton key={item} $tone={tone(item)}>{item}</SideButton>
        ))}
      </SideStack>
      <Spacer />
      <Rule />
      <SideStack $gap={10} $top={42}>
        <SideButton $tone="blue" $small>Print</SideButton>
        <SideButton $tone="blue" $small>Close</SideButton>
      </SideStack>
    </Sidebar>
  );
}

function Toolbar({ fuel, focused }) {
  const id = useId();
  return (
    <ToolRow>
      <ToolButton aria-label="Move items"><MoveIcon /></ToolButton>
      <ToolButton aria-label="Clear list"><EraseIcon /></ToolButton>
      <ToolButton aria-label="Swap lists"><SwapIcon /></ToolButton>
      <SortBox>
        <SelectWrap>
          <select id={id} aria-label="Data group" defaultValue="Primary">
            <option>Primary</option>
          </select>
          <SelectArrow>
            <svg width="7" height="4" viewBox="0 0 7 4"><path d="M0 0h7L3.500 4z" /></svg>
          </SelectArrow>
        </SelectWrap>
        <CheckLabel><input type="checkbox" />Sort A to Z</CheckLabel>
      </SortBox>
      <ToolButton aria-label="Graph"><ChartIcon /></ToolButton>
      {fuel && <FuelButton aria-label="Fuel graph"><FuelIcon /></FuelButton>}
      <RecordButton aria-label="Record" $focused={focused}><RecordIcon /></RecordButton>
    </ToolRow>
  );
}

function Techstream({ data }) {
  const arrow = data.focused ? "#000" : "#555";
  return (
    <Screen>
      <TitleBar>
        <TechLogo size={17} />
        <Title>Techstream (Ver 18.00.008) - {data.title}</Title>
        <WindowButtons>
          <GlyphButton aria-label="Minimize">
            <svg width="11" height="11" viewBox="0 0 11 11" stroke="currentColor"><path d="M0 5.500h10" /></svg>
          </GlyphButton>
          <GlyphButton aria-label="Restore">
            <svg width="11" height="11" viewBox="0 0 11 11" stroke="currentColor" fill="none"><path d="M.5 2.500h8v8h-8zM2.500 2.500v-2h8v8h-2" /></svg>
          </GlyphButton>
          <GlyphButton aria-label="Close"><CloseGlyph /></GlyphButton>
        </WindowButtons>
      </TitleBar>
      <MenuBar>
        {["File", "Function", "Setup", "TechDoc", "User", "Help"].map((item) => (
          <a key={item} href={`#${item}`}>{item}</a>
        ))}
      </MenuBar>
      <Tabs>
        <Tab $width={101} $edge>System Select</Tab>
        <Tab $width={85}>Stored Data</Tab>
        <Tab $width={146} $edge $active>Engine and ECT Live</Tab>
      </Tabs>
      <Workspace>
        <SideMenu active={data.active} />
        <Panel>
          <GridBox>
            <GridColumns>
              <ParameterTable rows={data.left} />
              <ParameterTable rows={data.right} />
            </GridColumns>
            <ScrollBar>
              <ScrollArrow aria-label="Scroll left"><Chevron color={arrow} /></ScrollArrow>
              <ScrollTrack $end={data.scrolled}><ScrollThumb $dark={data.focused} /></ScrollTrack>
              <ScrollArrow aria-label="Scroll right"><Chevron flip /></ScrollArrow>
            </ScrollBar>
          </GridBox>
          <Toolbar fuel={data.fuel} focused={data.focused} />
        </Panel>
      </Workspace>
      <StatusBar>
        <StatusCell $width={45}>{data.status[0]}</StatusCell>
        <StatusCell $width={125}>Engine and ECT</StatusCell>
        <StatusCell $width={385}>{data.status[1]}</StatusCell>
        <StatusCell $width={135} $push>Default User</StatusCell>
        <StatusCell $width={74}>DLC 3<Led /></StatusCell>
      </StatusBar>
      <TaskBar>
        <StartButton aria-label="Start"><WindowsIcon /></StartButton>
        <Search>
          <SearchIcon />
          <input type="text" aria-label="Search" placeholder="Type here to search" />
        </Search>
        <Pinned>
          {data.tasks.map(([name, state]) => (
            <TaskButton key={name} $state={state} aria-label={name}>{taskIcons[name]}</TaskButton>
          ))}
        </Pinned>
        <Tray>
          {data.weather && (
            <Weather>
              <WeatherIcon partly={data.title === "572"} />
              <span>{data.weather[0]}</span>
              <span>{data.weather[1]}</span>
            </Weather>
          )}
          <TrayIcons>
            <UpIcon />
            <BatteryIcon kind={data.battery} />
            {data.battery === "eco" ? <WifiIcon /> : <GlobeIcon />}
            <SoundIcon />
          </TrayIcons>
          <TrayText $width={42}>{data.lang[0]}<br />{data.lang[1]}</TrayText>
          <TrayText $width={66}>{data.time}<br />16.3.2026 г.</TrayText>
          <Notice aria-label="Notifications"><NoticeIcon /></Notice>
          <ShowDesktop />
        </Tray>
      </TaskBar>
      {data.dialog && <StepDialog {...data.dialog} />}
      {data.marks.map(([x, y, w, h]) => (
        <Mark key={y} $x={x} $y={y} $w={w} $h={h} />
      ))}
    </Screen>
  );
}

export default function App() {
  return (
    <>
      <GlobalStyle />
      <Wall>
        {screens.map((data, i) => (
          <Techstream key={i} data={data} />
        ))}
      </Wall>
    </>
  );
}
